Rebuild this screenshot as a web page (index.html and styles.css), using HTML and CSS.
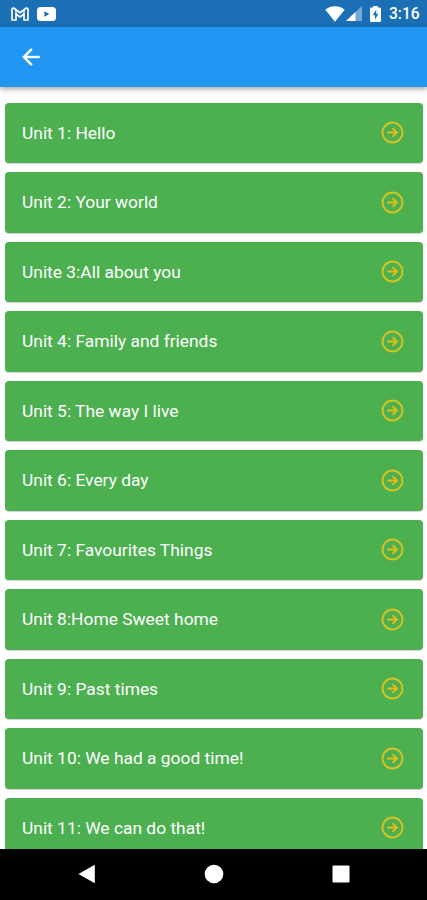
FILE: index.html
```html
<!DOCTYPE html>
<html lang="en">
<head>
  <meta charset="UTF-8" />
  <meta name="viewport" content="width=device-width, initial-scale=1.0" />
  <title>Units</title>
  <link rel="stylesheet" href="styles.css">
</head>
<body>
  <svg class="defs" width="0" height="0">
    <symbol id="go" viewBox="0 0 24 24">
      <circle cx="12" cy="12" r="10.4" fill="none" stroke="currentColor" stroke-width="2" />
      <path d="M6.4 12h10M12 7.4l4.6 4.6-4.6 4.6" fill="none" stroke="#e3bd16" stroke-width="2.1" />
    </symbol>
  </svg>

  <div class="status">
    <svg class="mail" width="18" height="14" viewBox="0 0 18 14">
      <path d="M1 2.6Q1 1 2.6 1L9 5.8 15.4 1Q17 1 17 2.6V13H13V7L9 10 5 7V13H1Z" fill="none" stroke="#fff" stroke-width="1.7" stroke-linejoin="round" />
      <path d="M5 3v4M13 3v4" stroke="#fff" stroke-width="1.4" />
    </svg>
    <svg class="video" width="19" height="14" viewBox="0 0 19 14">
      <rect width="19" height="14" rx="3.5" fill="#fff" />
      <path d="M7.4 4.2v5.6l5-2.8z" fill="#1a6fb5" />
    </svg>
    <div class="spacer"></div>
    <svg class="wifi" width="20" height="16" viewBox="0 0 20 16">
      <path d="M.3 3.7C6-.9 14-.9 19.7 3.7L10 15.8z" fill="#fff" />
    </svg>
    <svg class="signal" width="16" height="15" viewBox="0 0 16 15">
      <path d="M0 15L16 0v15z" fill="#fff" opacity=".4" />
      <path d="M0 15L9.5 6v9z" fill="#fff" />
    </svg>
    <svg class="battery" width="11" height="16" viewBox="0 0 11 16">
      <path d="M3.2 0h4.6v1.6H9.7Q11 1.6 11 2.9V14.7Q11 16 9.7 16H1.3Q0 16 0 14.7V2.9Q0 1.6 1.3 1.6H3.2z" fill="#fff" />
      <path d="M6.2 3.6L2.8 9.3H5v4.4l3.3-6H6.2z" fill="#1a6fb5" />
    </svg>
    <span class="time">3:16</span>
  </div>

  <div class="appbar">
    <svg width="26" height="26" viewBox="0 0 24 24">
      <path d="M20 11H7.83l5.59-5.59L12 4l-8 8 8 8 1.41-1.41L7.83 13H20v-2z" fill="#fff" stroke="#fff" stroke-width=".3" />
    </svg>
  </div>

  <div class="list">
    <div class="card"><span>Unit 1: Hello</span><svg class="go"><use href="#go" /></svg></div>
    <div class="card"><span>Unit 2: Your world</span><svg class="go"><use href="#go" /></svg></div>
    <div class="card"><span>Unite 3:All about you</span><svg class="go"><use href="#go" /></svg></div>
    <div class="card"><span>Unit 4: Family and friends</span><svg class="go"><use href="#go" /></svg></div>
    <div class="card"><span>Unit 5: The way I live</span><svg class="go"><use href="#go" /></svg></div>
    <div class="card"><span>Unit 6: Every day</span><svg class="go"><use href="#go" /></svg></div>
    <div class="card"><span>Unit 7: Favourites Things</span><svg class="go"><use href="#go" /></svg></div>
    <div class="card"><span>Unit 8:Home Sweet home</span><svg class="go"><use href="#go" /></svg></div>
    <div class="card"><span>Unit 9: Past times</span><svg class="go"><use href="#go" /></svg></div>
    <div class="card"><span>Unit 10: We had a good time!</span><svg class="go"><use href="#go" /></svg></div>
    <div class="card"><span>Unit 11: We can do that!</span><svg class="go"><use href="#go" /></svg></div>
  </div>

  <div class="navbar">
    <svg width="18" height="20" viewBox="0 0 18 20"><path d="M.4 10L16.8 .8v18.4z" fill="#fff" /></svg>
    <svg width="20" height="20" viewBox="0 0 20 20"><circle cx="10" cy="10" r="9.3" fill="#fff" /></svg>
    <svg width="18" height="18" viewBox="0 0 18 18"><rect x=".5" y=".5" width="17" height="17" rx="1" fill="#fff" /></svg>
  </div>
</body>
</html>
```

FILE: styles.css
```css
body {
  margin: 0;
  height: 100vh;
  display: flex;
  flex-direction: column;
  overflow: hidden;
  background: #fefefe;
  font-family: Roboto, sans-serif;
}
svg {
  display: block;
  flex: none;
}
.defs {
  position: absolute;
}
.status {
  height: 27px;
  flex: none;
  display: flex;
  align-items: center;
  box-sizing: border-box;
  padding: 0 8px 0 11px;
  background: #1a6fb5;
  color: #fff;
}
.video {
  margin-left: 8px;
}
.spacer {
  flex: 1;
}
.signal {
  margin-left: 1px;
}
.battery {
  margin-left: 8px;
}
.time {
  width: 30px;
  margin-left: 8px;
  font-size: 15.6px;
  font-weight: 500;
  line-height: 27px;
  padding-top: 1px;
  box-sizing: border-box;
}
.appbar {
  height: 60px;
  flex: none;
  display: flex;
  align-items: center;
  padding-left: 18px;
  background: #2196f3;
  box-shadow: 0 2px 5px rgba(0, 0, 0, 0.35);
}
.list {
  flex: 1;
  min-height: 0;
  overflow: hidden;
  margin-top: 12px;
  padding: 3.8px 4px 0 5px;
}
.card {
  display: flex;
  align-items: center;
  justify-content: space-between;
  box-sizing: border-box;
  height: 60.5px;
  margin-bottom: 9px;
  padding: 0 19px 1px 17px;
  border-radius: 4px;
  background: #4caf50;
  box-shadow: 0 1px 1px rgba(0, 0, 0, 0.18);
  color: #fff;
  font-size: 17.4px;
}
.go {
  width: 23px;
  height: 23px;
  color: #d2c324;
}
.navbar {
  height: 51px;
  flex: none;
  display: flex;
  align-items: center;
  justify-content: space-between;
  box-sizing: border-box;
  padding: 0 77px 1px;
  background: #000;
}
.navbar svg:first-child {
  margin-left: 1px;
}
```
